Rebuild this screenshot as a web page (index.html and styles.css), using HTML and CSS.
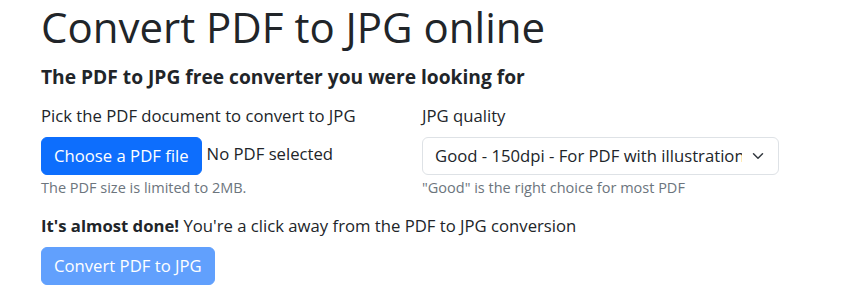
FILE: index.html
```html
<!DOCTYPE html>
<html lang="en">
<head>
<meta charset="utf-8">
<title>Convert PDF to JPG online</title>
<link rel="stylesheet" href="styles.css">
</head>
<body>
<main class="page">
  <h1 class="title">Convert PDF to JPG online</h1>
  <h5 class="subtitle">The PDF to JPG free converter you were looking for</h5>
  <div class="row">
    <div class="col">
      <div class="form-label">Pick the PDF document to convert to JPG</div>
      <div class="file-line">
        <span class="btn btn-primary">Choose a PDF file</span>
        <span class="file-status">No PDF selected</span>
      </div>
      <div class="form-text">The PDF size is limited to 2MB.</div>
    </div>
    <div class="col">
      <div class="form-label">JPG quality</div>
      <div class="select-wrap">
        <select class="form-select">
          <option>Good - 150dpi - For PDF with illustrations</option>
        </select>
        <svg class="chevron" viewBox="0 0 16 16" width="16" height="12" aria-hidden="true"><path fill="none" stroke="#343a40" stroke-linecap="round" stroke-linejoin="round" stroke-width="2" d="m2 5 6 6 6-6"/></svg>
      </div>
      <div class="form-text">"Good" is the right choice for most PDF</div>
    </div>
  </div>
  <p class="almost"><strong>It's almost done!</strong> You're a click away from the PDF to JPG conversion</p>
  <span class="btn btn-primary disabled">Convert PDF to JPG</span>
</main>
</body>
</html>
```

FILE: styles.css
```css
html, body {
  margin: 0;
  padding: 0;
  background: #fff;
}

body {
  font-family: "Open Sans", "Noto Sans", sans-serif;
  font-size: 16.7px;
  line-height: 24px;
  color: #212529;
}

.page {
  width: 738px;
  padding: 0 0 0 41px;
}

.title {
  font-size: 42px;
  font-weight: 400;
  line-height: 54px;
  margin: 0 0 11px 0;
}

.subtitle {
  font-size: 19.2px;
  font-weight: 700;
  line-height: 24px;
  margin: 0 0 15px 0;
}

.row {
  display: grid;
  grid-template-columns: 1fr 1fr;
  column-gap: 24px;
}

.form-label {
  margin-bottom: 9px;
}

.file-line {
  display: flex;
  align-items: center;
  gap: 5px;
}

.file-status {
  position: relative;
  top: -2px;
}

.btn {
  display: inline-block;
  box-sizing: border-box;
  height: 38px;
  padding: 6px 12px;
  font-size: 16.7px;
  line-height: 24px;
  border: 1px solid transparent;
  border-radius: 6px;
}

.btn-primary {
  background: #0d6efd;
  border-color: #0d6efd;
  color: #fff;
}

.btn-primary.disabled {
  opacity: 0.65;
}

.select-wrap {
  position: relative;
}

.form-select {
  display: block;
  box-sizing: border-box;
  width: 100%;
  height: 38px;
  padding: 6px 36px 6px 12px;
  font-family: inherit;
  font-size: 16.7px;
  line-height: 24px;
  color: #212529;
  background: #fff;
  border: 1px solid #dee2e6;
  border-radius: 6px;
  appearance: none;
  -webkit-appearance: none;
}

.chevron {
  position: absolute;
  right: 13px;
  top: 13px;
  pointer-events: none;
}

.form-text {
  margin-top: 2px;
  font-size: 14.5px;
  line-height: 21px;
  color: #6c757d;
}

.almost {
  margin: 16px 0 9px 0;
}

.almost strong {
  font-weight: 700;
}
```
